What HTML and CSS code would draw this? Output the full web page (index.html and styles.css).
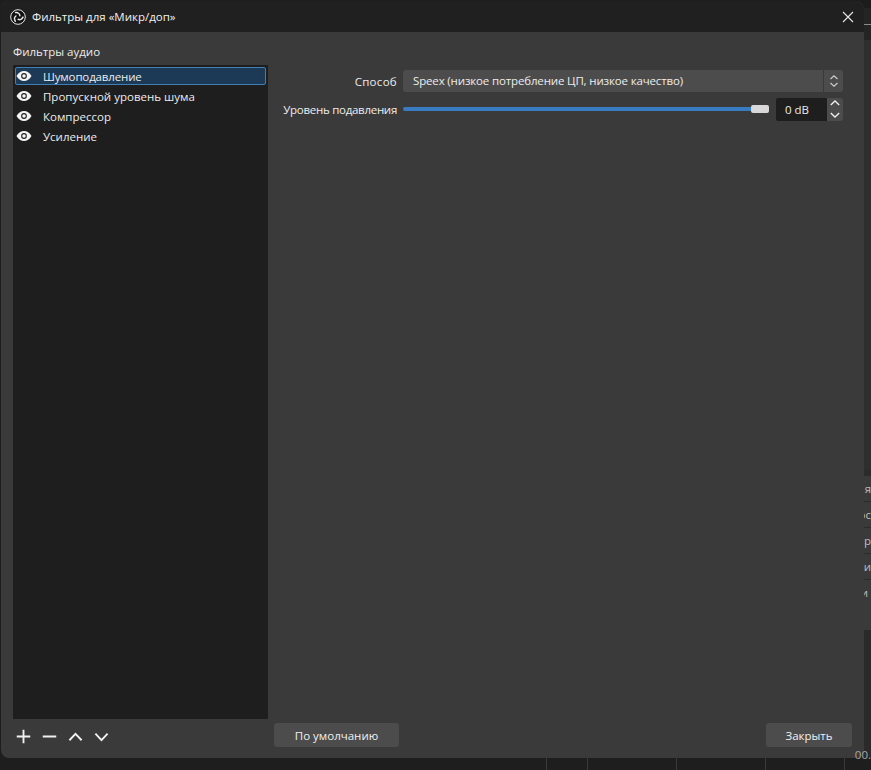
FILE: index.html
```html
<!DOCTYPE html>
<html lang="ru">
<head>
    <meta charset="UTF-8">
    <meta name="viewport" content="width=device-width, initial-scale=1.0">
    <title>Фильтры для «Микр/доп»</title>
    <link rel="stylesheet" href="styles.css">
</head>
<body>
    <div class="backdrop">
        <div class="back-line"></div>
        <div class="back-row back-row-1">я</div>
        <div class="back-row back-row-2">ос</div>
        <div class="back-row back-row-3">ер</div>
        <div class="back-row back-row-4">ди</div>
        <div class="back-row back-row-5">и</div>
    </div>
    <div class="statusbar">
        <div class="status-cell status-cell-1"></div>
        <div class="status-cell status-cell-2"></div>
        <div class="status-cell status-cell-2"></div>
        <div class="status-cell status-cell-3"></div>
        <div class="status-cell status-cell-4"></div>
    </div>

    <div class="window">
        <div class="titlebar">
            <svg class="app-logo" viewBox="0 0 16 16">
                <circle cx="8" cy="8" r="7.300" fill="#111" stroke="#e8e8e8" stroke-width="1"/>
                <path d="M9.900 6.700C9.700 4.600 7.900 3.300 5.600 3.600" fill="none" stroke="#e8e8e8" stroke-width="1.500" stroke-linecap="round"/>
                <path d="M9.900 6.700C9.700 4.600 7.900 3.300 5.600 3.600" fill="none" stroke="#e8e8e8" stroke-width="1.500" stroke-linecap="round" transform="rotate(120 8 8)"/>
                <path d="M9.900 6.700C9.700 4.600 7.900 3.300 5.600 3.600" fill="none" stroke="#e8e8e8" stroke-width="1.500" stroke-linecap="round" transform="rotate(240 8 8)"/>
            </svg>
            <span class="title-text">Фильтры для «Микр/доп»</span>
            <svg class="close-x" viewBox="0 0 12 12">
                <path d="M1 1l10 10M11 1L1 11" stroke="#e6e6e6" stroke-width="1.100" fill="none"/>
            </svg>
        </div>

        <div class="content">
            <div class="left-col">
                <div class="list-label">Фильтры аудио</div>
                <div class="filter-list">
                    <div class="filter-item selected">
                        <svg class="eye" viewBox="0 0 16 12"><path d="M0.500 6C2.500 2.600 5 1 8 1s5.500 1.600 7.500 5C13.500 9.400 11 11 8 11S2.500 9.400 0.500 6z" fill="#f4f4f4"/><circle cx="8" cy="6" r="2.900" fill="#222"/><circle cx="8" cy="6" r="1.800" fill="#f4f4f4"/></svg>
                        <span class="item-name-tight">Шумоподавление</span>
                    </div>
                    <div class="filter-item">
                        <svg class="eye" viewBox="0 0 16 12"><path d="M0.500 6C2.500 2.600 5 1 8 1s5.500 1.600 7.500 5C13.500 9.400 11 11 8 11S2.500 9.400 0.500 6z" fill="#f4f4f4"/><circle cx="8" cy="6" r="2.900" fill="#222"/><circle cx="8" cy="6" r="1.800" fill="#f4f4f4"/></svg>
                        <span>Пропускной уровень шума</span>
                    </div>
                    <div class="filter-item">
                        <svg class="eye" viewBox="0 0 16 12"><path d="M0.500 6C2.500 2.600 5 1 8 1s5.500 1.600 7.500 5C13.500 9.400 11 11 8 11S2.500 9.400 0.500 6z" fill="#f4f4f4"/><circle cx="8" cy="6" r="2.900" fill="#222"/><circle cx="8" cy="6" r="1.800" fill="#f4f4f4"/></svg>
                        <span>Компрессор</span>
                    </div>
                    <div class="filter-item">
                        <svg class="eye" viewBox="0 0 16 12"><path d="M0.500 6C2.500 2.600 5 1 8 1s5.500 1.600 7.500 5C13.500 9.400 11 11 8 11S2.500 9.400 0.500 6z" fill="#f4f4f4"/><circle cx="8" cy="6" r="2.900" fill="#222"/><circle cx="8" cy="6" r="1.800" fill="#f4f4f4"/></svg>
                        <span>Усиление</span>
                    </div>
                </div>
                <div class="list-tools">
                    <svg class="tool" viewBox="0 0 16 16"><path d="M8 .8v14.400M.8 8h14.400" stroke="#f0f0f0" stroke-width="2" fill="none"/></svg>
                    <svg class="tool" viewBox="0 0 16 16"><path d="M.8 8h14.400" stroke="#f0f0f0" stroke-width="2" fill="none"/></svg>
                    <svg class="tool" viewBox="0 0 16 16"><path d="M1.500 12L8 5.200 14.500 12" stroke="#f0f0f0" stroke-width="2" fill="none"/></svg>
                    <svg class="tool" viewBox="0 0 16 16"><path d="M1.500 5L8 11.800 14.500 5" stroke="#f0f0f0" stroke-width="2" fill="none"/></svg>
                </div>
            </div>

            <div class="right-col">
                <div class="props">
                    <div class="prop-row">
                        <label class="prop-label prop-label-wide">Способ</label>
                        <div class="select">
                            <span class="select-text">Speex (низкое потребление ЦП, низкое качество)</span>
                            <div class="select-arrows">
                                <svg viewBox="0 0 10 14"><path d="M1.500 5L5 1.800 8.500 5M1.500 9L5 12.200 8.500 9" stroke="#cfcfcf" stroke-width="1.100" fill="none"/></svg>
                            </div>
                        </div>
                    </div>
                    <div class="prop-row">
                        <label class="prop-label prop-label-tight">Уровень подавления</label>
                        <div class="slider">
                            <div class="slider-fill"></div>
                            <div class="slider-handle"></div>
                        </div>
                        <div class="spin">
                            <div class="spin-value">0 dB</div>
                            <div class="spin-btns">
                                <div class="spin-btn"><svg viewBox="0 0 10 6"><path d="M.8 5L5 1l4.200 4" stroke="#f0f0f0" stroke-width="1.300" fill="none"/></svg></div>
                                <div class="spin-btn"><svg viewBox="0 0 10 6"><path d="M.8 1L5 5l4.200-4" stroke="#f0f0f0" stroke-width="1.300" fill="none"/></svg></div>
                            </div>
                        </div>
                    </div>
                </div>
                <div class="actions">
                    <button class="btn btn-default">По умолчанию</button>
                    <button class="btn btn-close">Закрыть</button>
                </div>
            </div>
        </div>
    </div>

    <div class="back-status">00.</div>
</body>
</html>
```

FILE: styles.css
```css
* {
    box-sizing: border-box;
}
html, body {
    margin: 0;
    height: 100%;
}
body {
    position: relative;
    width: 871px;
    height: 770px;
    overflow: hidden;
    background-color: #1e1e1e;
    color: #ececec;
    font-family: "Open Sans", "Noto Sans", sans-serif;
    font-size: 12px;
}

/* main window peeking out behind the dialog */
.backdrop {
    position: absolute;
    left: 855px;
    top: 0;
    width: 16px;
    height: 758px;
    background: linear-gradient(#1c1c1c 0 8px, #242424 8px 40px, #2e2e2e 40px 470px, #2b2b2b 470px 602px, #3a3a3a 602px 630px, #2a2a2a 630px);
}
.back-line {
    position: absolute;
    left: 0;
    top: 24px;
    width: 16px;
    height: 1px;
    background-color: #8a8a8a;
}
.back-row {
    position: absolute;
    left: 0;
    width: 16px;
    height: 25px;
    background-color: #3a3a3a;
    font-size: 11.500px;
    line-height: 25px;
    text-align: right;
    color: #bdbdbd;
    white-space: nowrap;
}
.back-row-1 { top: 476px; }
.back-row-2 { top: 502px; }
.back-row-3 { top: 528px; }
.back-row-4 { top: 554px; }
.back-row-5 { top: 580px; padding-right: 3px; }
.statusbar {
    position: absolute;
    left: 546px;
    top: 758px;
    display: flex;
    width: 325px;
    height: 12px;
}
.status-cell {
    border-left: 1px solid #3a3a3a;
}
.status-cell-1 { width: 41px; }
.status-cell-2 { width: 89px; }
.status-cell-3 { width: 79px; }
.status-cell-4 { width: 27px; }
.back-status {
    position: absolute;
    right: 0;
    top: 747px;
    font-size: 11.500px;
    color: #a8a8a8;
}

.window {
    position: absolute;
    left: 1px;
    top: 1px;
    width: 863px;
    height: 757px;
    display: flex;
    flex-direction: column;
    background-color: #3a3a3a;
    border-radius: 8px;
    overflow: hidden;
}

.titlebar {
    display: flex;
    align-items: center;
    height: 31px;
    flex: none;
    padding: 0 10px 0 9px;
    background-color: #202020;
}
.app-logo {
    width: 16px;
    height: 16px;
    margin-right: 6px;
}
.title-text {
    flex: 1;
    font-size: 11.500px;
    color: #f0f0f0;
}
.close-x {
    width: 12px;
    height: 12px;
}

.content {
    display: flex;
    flex: 1;
    min-height: 0;
}

.left-col {
    display: flex;
    flex-direction: column;
    width: 267px;
    flex: none;
    padding-left: 12px;
}
.list-label {
    height: 33px;
    padding-top: 12px;
    line-height: 16px;
    font-size: 11.500px;
}
.filter-list {
    height: 654px;
    padding: 2px;
    background-color: #1e1e1e;
}
.filter-item {
    display: flex;
    align-items: center;
    height: 20px;
    border: 1px solid transparent;
    border-radius: 2px;
    font-size: 11.500px;
}
.filter-item.selected {
    background-color: #1c3a56;
    border-color: #3f7fb5;
    height: 18px;
    margin-bottom: 1px;
}
.item-name-tight {
    letter-spacing: -.15px;
}
.eye {
    width: 16px;
    height: 12px;
    margin-right: 11px;
    flex: none;
}
.list-tools {
    display: flex;
    align-items: center;
    gap: 11px;
    padding: 10px 0 0 3px;
}
.tool {
    width: 15px;
    height: 15px;
}

.right-col {
    display: flex;
    flex-direction: column;
    flex: 1;
    min-width: 0;
}
.props {
    flex: 1;
    padding: 38px 21px 0 14px;
}
.prop-row {
    display: flex;
    align-items: center;
    height: 22px;
    margin-bottom: 6px;
}
.prop-label {
    width: 115px;
    margin-right: 6px;
    flex: none;
    text-align: right;
    font-size: 11.500px;
    white-space: nowrap;
}
.prop-label-wide {
    letter-spacing: .3px;
}
.prop-label-tight {
    letter-spacing: -.28px;
}
.select {
    display: flex;
    flex: 1;
    height: 22px;
    background-color: #4c4c4c;
    border-radius: 3px;
    overflow: hidden;
}
.select-text {
    flex: 1;
    padding-left: 10px;
    line-height: 22px;
    font-size: 11.500px;
    letter-spacing: -.15px;
}
.select-arrows {
    display: flex;
    align-items: center;
    justify-content: center;
    width: 20px;
    border-left: 1px solid #3a3a3a;
}
.select-arrows svg {
    width: 10px;
    height: 14px;
}
.slider {
    position: relative;
    flex: 1;
    height: 22px;
    margin-right: 7px;
}
.slider-fill {
    position: absolute;
    left: 0;
    right: 10px;
    top: 9px;
    height: 4px;
    background-color: #3a7cc4;
    border-radius: 2px;
}
.slider-handle {
    position: absolute;
    right: 0;
    top: 7px;
    width: 18px;
    height: 8px;
    background-color: #d8d8d8;
    border-radius: 2px;
}
.spin {
    display: flex;
    width: 67px;
    height: 23px;
    flex: none;
}
.spin-value {
    flex: 1;
    padding-left: 9px;
    line-height: 23px;
    font-size: 11.500px;
    background-color: #1e1e1e;
    border-radius: 2px 0 0 2px;
}
.spin-btns {
    display: flex;
    flex-direction: column;
    width: 16px;
    background-color: #4c4c4c;
    border-radius: 0 3px 3px 0;
}
.spin-btn {
    display: flex;
    flex: 1;
    align-items: center;
    justify-content: center;
}
.spin-btn svg {
    width: 10px;
    height: 6px;
}

.actions {
    display: flex;
    justify-content: space-between;
    padding: 0 12px 11px 6px;
}
.btn {
    height: 24px;
    border: none;
    border-radius: 3px;
    background-color: #4c4c4c;
    color: #f0f0f0;
    font-family: inherit;
    font-size: 11.500px;
}
.btn-default {
    width: 125px;
}
.btn-close {
    width: 86px;
}
```
